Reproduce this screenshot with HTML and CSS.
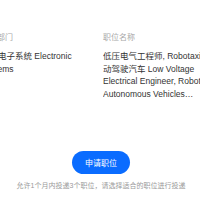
FILE: index.html
```html
<!DOCTYPE html>
<html lang="zh-CN">
<head>
<meta charset="utf-8">
<link rel="stylesheet" href="styles.css">
</head>
<body>
<div class="page">
  <div class="fields">
    <div class="field">
      <div class="label">所属部门</div>
      <div class="value">汽车电子系统 Electronic Systems</div>
    </div>
    <div class="field">
      <div class="label">职位名称</div>
      <div class="value clamp">低压电气工程师, Robotaxi, 自动驾驶汽车 Low Voltage Electrical Engineer, Robotaxi, Autonomous Vehicles Engineer</div>
    </div>
  </div>
  <div class="actions">
    <button class="apply">申请职位</button>
    <p class="note">允许1个月内投递3个职位，请选择适合的职位进行投递</p>
  </div>
</div>
</body>
</html>
```

FILE: styles.css
```css
html, body {
  margin: 0;
  padding: 0;
  background: #fff;
  overflow: hidden;
}
body {
  width: 200px;
  height: 200px;
  font-family: "Liberation Sans", "Noto Sans CJK SC", sans-serif;
}
.page {
  display: flex;
  flex-direction: column;
  padding-top: 33px;
}
.fields {
  display: grid;
  grid-template-columns: 118px 118px;
  column-gap: 4px;
  margin-left: -19px;
}
.label {
  font-size: 8px;
  line-height: 10px;
  color: #a8a8a8;
  margin-bottom: 7px;
  white-space: nowrap;
}
.value {
  font-size: 8.5px;
  line-height: 12.5px;
  color: #333;
}
.clamp {
  display: -webkit-box;
  -webkit-box-orient: vertical;
  -webkit-line-clamp: 4;
  overflow: hidden;
}
.actions {
  display: flex;
  flex-direction: column;
  align-items: center;
  margin-top: 51px;
  padding-left: 2px;
}
.apply {
  width: 58px;
  height: 23px;
  border: none;
  border-radius: 12px;
  background: #0a6cff;
  color: #fff;
  font-family: "Noto Sans CJK SC", sans-serif;
  font-size: 8px;
  padding: 0;
}
.note {
  margin: 7px 0 0;
  font-size: 7px;
  line-height: 10px;
  color: #9a9a9a;
  white-space: nowrap;
}
```
